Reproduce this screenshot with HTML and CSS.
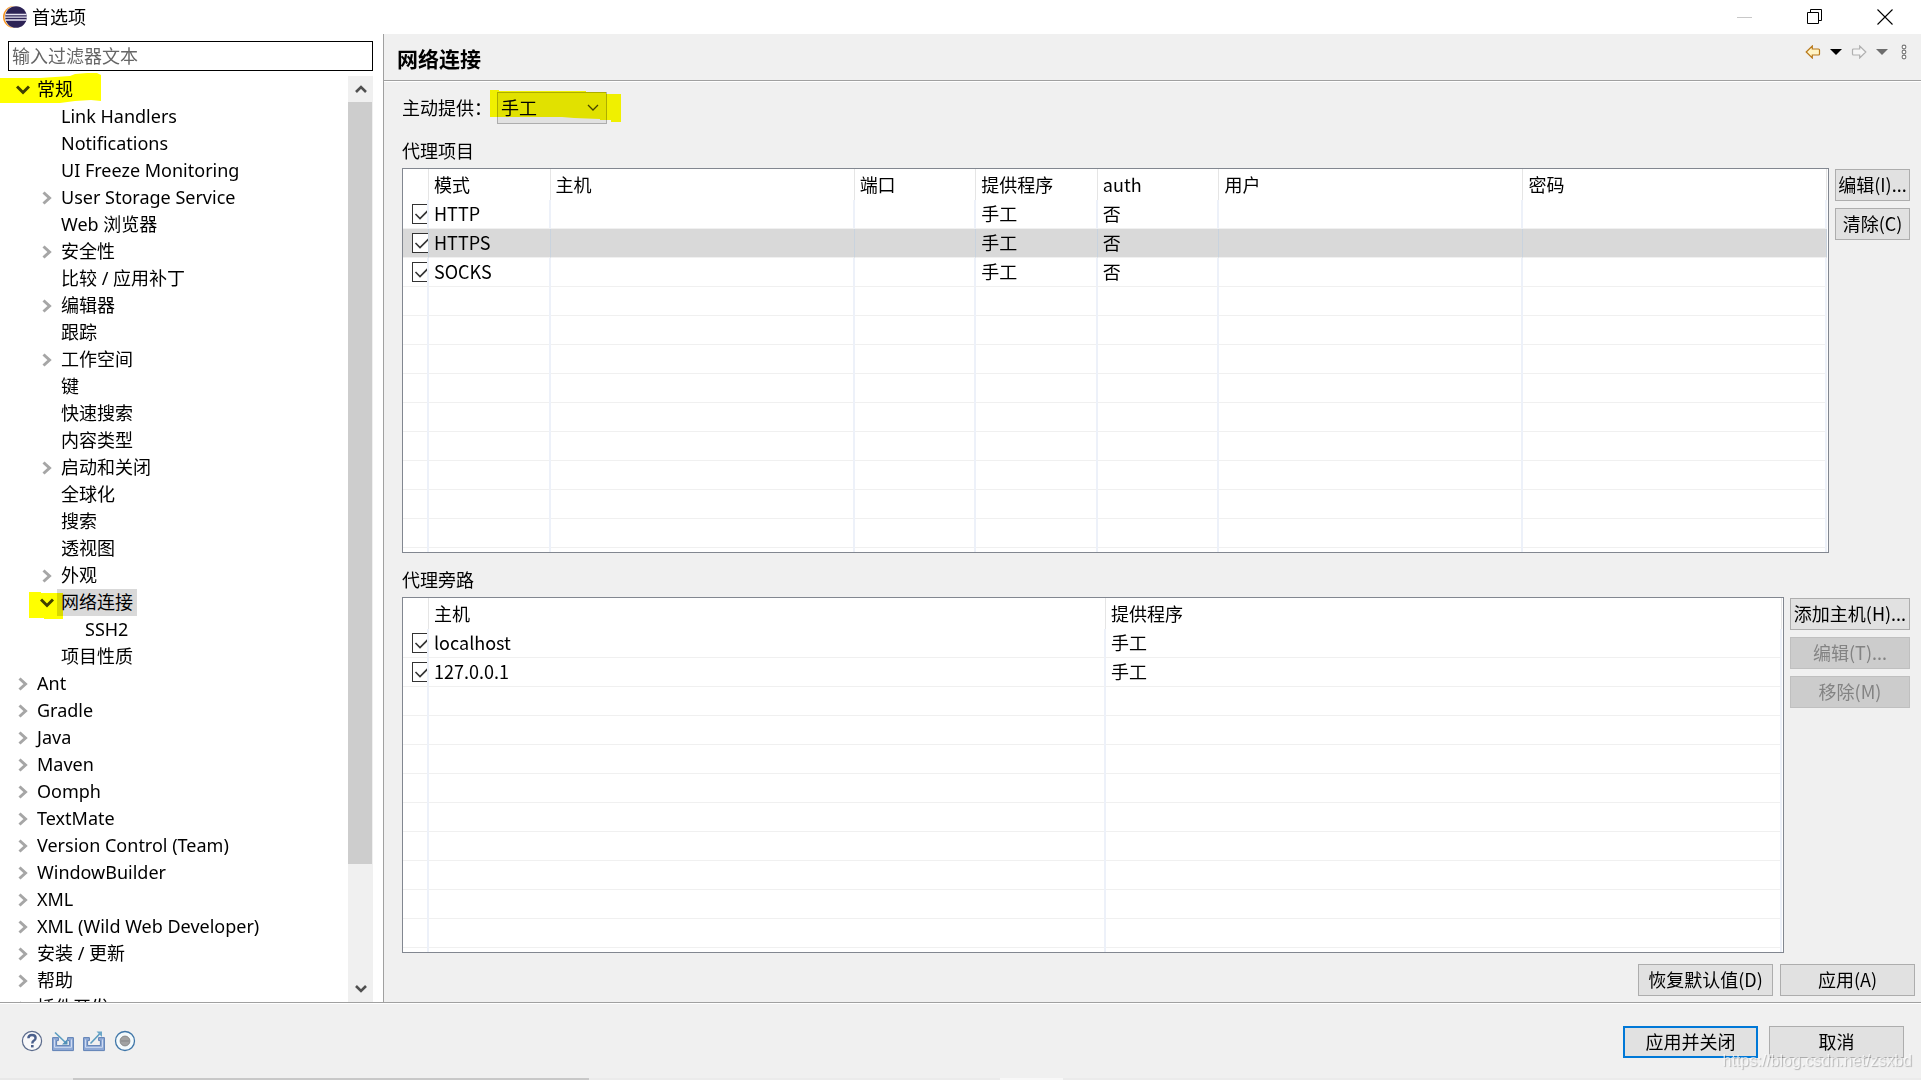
FILE: index.html
```html
<!DOCTYPE html>
<html lang="zh-CN">
<head>
    <meta charset="UTF-8">
    <meta name="viewport" content="width=device-width, initial-scale=1.0">
    <title>首选项</title>
    <link rel="stylesheet" href="styles.css">
</head>
<body>
    <!-- Shared icons -->
    <svg class="sprite" aria-hidden="true">
        <symbol id="chevron-right" viewBox="0 0 10 14">
            <path d="M1.5 1.5 L7.5 7 L1.5 12.5" fill="none" stroke="#a6a6a6" stroke-width="3"/>
        </symbol>
        <symbol id="chevron-down" viewBox="0 0 14 10">
            <path d="M1 1.5 L7 7.5 L13 1.5" fill="none" stroke="#404040" stroke-width="3"/>
        </symbol>
    </svg>

    <div class="window">
        <header class="titlebar">
            <svg class="logo" viewBox="0 0 24 22">
                <circle cx="11" cy="11" r="11" fill="#f7941e"/>
                <circle cx="12.6" cy="11" r="11" fill="#fff"/>
                <circle cx="13" cy="11" r="10.8" fill="#2c2255"/>
                <path d="M2.4 8.5h21.2M2 11.2h22M2.4 14h21.2" stroke="#e6e3f2" stroke-width="1.3"/>
            </svg>
            <h1>首选项</h1>
            <div class="window-buttons">
                <button type="button" class="win-btn" aria-label="最小化">
                    <svg width="16" height="16"><path d="M0 8.5h15" stroke="#c8c8c8"/></svg>
                </button>
                <button type="button" class="win-btn" aria-label="还原">
                    <svg width="16" height="16"><path d="M.5 3.5h11v11H.5zM3.5 3.5v-3h11v11h-3" fill="none" stroke="#000"/></svg>
                </button>
                <button type="button" class="win-btn" aria-label="关闭">
                    <svg width="16" height="16"><path d="M.5 .5l15 15M15.5 .5l-15 15" stroke="#000" stroke-width="1.1"/></svg>
                </button>
            </div>
        </header>

        <div class="content">
            <aside class="sidebar">
                <input type="text" class="filter" placeholder="输入过滤器文本" aria-label="输入过滤器文本">
                <div class="tree-wrap">
                    <ul class="tree">
                        <li>
                            <div class="node marked">
                                <button type="button" class="twisty" aria-label="折叠"><svg class="down"><use href="#chevron-down"/></svg></button><span>常规</span>
                                <svg class="marker marker-general" viewBox="0 0 101 31"><path d="M0 6h40l30-2 5-2 12-1h10l4 2v26l-10-1-16 1-15 2H0z"/></svg>
                            </div>
                            <ul>
                                <li><div class="node"><span>Link Handlers</span></div></li>
                                <li><div class="node"><span>Notifications</span></div></li>
                                <li><div class="node"><span>UI Freeze Monitoring</span></div></li>
                                <li><div class="node"><button type="button" class="twisty" aria-label="展开"><svg><use href="#chevron-right"/></svg></button><span>User Storage Service</span></div></li>
                                <li><div class="node"><span>Web 浏览器</span></div></li>
                                <li><div class="node"><button type="button" class="twisty" aria-label="展开"><svg><use href="#chevron-right"/></svg></button><span>安全性</span></div></li>
                                <li><div class="node"><span>比较 / 应用补丁</span></div></li>
                                <li><div class="node"><button type="button" class="twisty" aria-label="展开"><svg><use href="#chevron-right"/></svg></button><span>编辑器</span></div></li>
                                <li><div class="node"><span>跟踪</span></div></li>
                                <li><div class="node"><button type="button" class="twisty" aria-label="展开"><svg><use href="#chevron-right"/></svg></button><span>工作空间</span></div></li>
                                <li><div class="node"><span>键</span></div></li>
                                <li><div class="node"><span>快速搜索</span></div></li>
                                <li><div class="node"><span>内容类型</span></div></li>
                                <li><div class="node"><button type="button" class="twisty" aria-label="展开"><svg><use href="#chevron-right"/></svg></button><span>启动和关闭</span></div></li>
                                <li><div class="node"><span>全球化</span></div></li>
                                <li><div class="node"><span>搜索</span></div></li>
                                <li><div class="node"><span>透视图</span></div></li>
                                <li><div class="node"><button type="button" class="twisty" aria-label="展开"><svg><use href="#chevron-right"/></svg></button><span>外观</span></div></li>
                                <li>
                                    <div class="node selected marked">
                                        <button type="button" class="twisty" aria-label="折叠"><svg class="down"><use href="#chevron-down"/></svg></button><span>网络连接</span>
                                        <svg class="marker marker-network" viewBox="0 0 34 27"><path d="M0 0h12v1h22v26H15v-1H0z"/></svg>
                                    </div>
                                    <ul>
                                        <li><div class="node"><span>SSH2</span></div></li>
                                    </ul>
                                </li>
                                <li><div class="node"><span>项目性质</span></div></li>
                            </ul>
                        </li>
                        <li><div class="node"><button type="button" class="twisty" aria-label="展开"><svg><use href="#chevron-right"/></svg></button><span>Ant</span></div></li>
                        <li><div class="node"><button type="button" class="twisty" aria-label="展开"><svg><use href="#chevron-right"/></svg></button><span>Gradle</span></div></li>
                        <li><div class="node"><button type="button" class="twisty" aria-label="展开"><svg><use href="#chevron-right"/></svg></button><span>Java</span></div></li>
                        <li><div class="node"><button type="button" class="twisty" aria-label="展开"><svg><use href="#chevron-right"/></svg></button><span>Maven</span></div></li>
                        <li><div class="node"><button type="button" class="twisty" aria-label="展开"><svg><use href="#chevron-right"/></svg></button><span>Oomph</span></div></li>
                        <li><div class="node"><button type="button" class="twisty" aria-label="展开"><svg><use href="#chevron-right"/></svg></button><span>TextMate</span></div></li>
                        <li><div class="node"><button type="button" class="twisty" aria-label="展开"><svg><use href="#chevron-right"/></svg></button><span>Version Control (Team)</span></div></li>
                        <li><div class="node"><button type="button" class="twisty" aria-label="展开"><svg><use href="#chevron-right"/></svg></button><span>WindowBuilder</span></div></li>
                        <li><div class="node"><button type="button" class="twisty" aria-label="展开"><svg><use href="#chevron-right"/></svg></button><span>XML</span></div></li>
                        <li><div class="node"><button type="button" class="twisty" aria-label="展开"><svg><use href="#chevron-right"/></svg></button><span>XML (Wild Web Developer)</span></div></li>
                        <li><div class="node"><button type="button" class="twisty" aria-label="展开"><svg><use href="#chevron-right"/></svg></button><span>安装 / 更新</span></div></li>
                        <li><div class="node"><button type="button" class="twisty" aria-label="展开"><svg><use href="#chevron-right"/></svg></button><span>帮助</span></div></li>
                        <li><div class="node"><button type="button" class="twisty" aria-label="展开"><svg><use href="#chevron-right"/></svg></button><span>插件开发</span></div></li>
                    </ul>
                    <div class="scrollbar">
                        <button type="button" class="scroll-btn" aria-label="向上滚动">
                            <svg width="12" height="10"><path d="M1 8 L6 3 L11 8" fill="none" stroke="#505050" stroke-width="2.6"/></svg>
                        </button>
                        <div class="scroll-track"><div class="scroll-thumb"></div></div>
                        <button type="button" class="scroll-btn" aria-label="向下滚动">
                            <svg width="12" height="10"><path d="M1 2 L6 7 L11 2" fill="none" stroke="#505050" stroke-width="2.6"/></svg>
                        </button>
                    </div>
                </div>
            </aside>

            <main class="page">
                <div class="page-header">
                    <h2>网络连接</h2>
                    <div class="history">
                        <button type="button" class="icon-btn" aria-label="后退">
                            <svg width="16" height="14"><path d="M1.2 7 L7.3 1 V4 H13.5 Q14.5 4 14.5 5 V9 Q14.5 10 13.5 10 H7.3 V13 Z" fill="#fff3c4" stroke="#b8781a" stroke-width="1.2"/></svg>
                        </button>
                        <button type="button" class="icon-btn" aria-label="后退历史">
                            <svg width="12" height="14"><path d="M0 4h12l-6 6z" fill="#000"/></svg>
                        </button>
                        <button type="button" class="icon-btn" aria-label="前进">
                            <svg width="16" height="14"><path d="M14.8 7 L8.7 1 V4 H2.5 Q1.5 4 1.5 5 V9 Q1.5 10 2.5 10 H8.7 V13 Z" fill="#f6f6f6" stroke="#b0b0b0" stroke-width="1.2"/></svg>
                        </button>
                        <button type="button" class="icon-btn" aria-label="前进历史">
                            <svg width="12" height="14"><path d="M0 4h12l-6 6z" fill="#6d6d6d"/></svg>
                        </button>
                        <button type="button" class="icon-btn menu-btn" aria-label="菜单">
                            <svg width="6" height="16"><g fill="#fff" stroke="#777" stroke-width="1.1"><circle cx="3" cy="3" r="1.9"/><circle cx="3" cy="8" r="1.9"/><circle cx="3" cy="13" r="1.9"/></g></svg>
                        </button>
                    </div>
                </div>

                <div class="page-body">
                    <div class="provider">
                        <label for="provider">主动提供：</label>
                        <div class="select-wrap">
                            <select id="provider">
                                <option>手工</option>
                            </select>
                            <svg class="marker marker-provider" viewBox="0 0 132 32"><path d="M0 0h9v1h87v1h20v2h15v28h-10v-2h-11v-1l-26-1-12-1H0z"/></svg>
                        </div>
                    </div>

                    <h3>代理项目</h3>
                    <div class="section section-entries">
                        <div class="table-box">
                            <table>
                                <colgroup>
                                    <col class="col-check"><col class="col-narrow"><col class="col-wide"><col class="col-narrow"><col class="col-narrow"><col class="col-narrow"><col class="col-wide"><col>
                                </colgroup>
                                <thead>
                                    <tr><th></th><th>模式</th><th>主机</th><th>端口</th><th>提供程序</th><th>auth</th><th>用户</th><th>密码</th></tr>
                                </thead>
                                <tbody>
                                    <tr><td><input type="checkbox" aria-label="HTTP" checked></td><td>HTTP</td><td></td><td></td><td>手工</td><td>否</td><td></td><td></td></tr>
                                    <tr class="selected"><td><input type="checkbox" aria-label="HTTPS" checked></td><td>HTTPS</td><td></td><td></td><td>手工</td><td>否</td><td></td><td></td></tr>
                                    <tr><td><input type="checkbox" aria-label="SOCKS" checked></td><td>SOCKS</td><td></td><td></td><td>手工</td><td>否</td><td></td><td></td></tr>
                                    <tr class="rest"><td></td><td></td><td></td><td></td><td></td><td></td><td></td><td></td></tr>
                                </tbody>
                            </table>
                        </div>
                        <div class="actions actions-small">
                            <button type="button" class="btn">编辑(I)...</button>
                            <button type="button" class="btn">清除(C)</button>
                        </div>
                    </div>

                    <h3>代理旁路</h3>
                    <div class="section section-bypass">
                        <div class="table-box">
                            <table>
                                <colgroup>
                                    <col class="col-check"><col class="col-half"><col>
                                </colgroup>
                                <thead>
                                    <tr><th></th><th>主机</th><th>提供程序</th></tr>
                                </thead>
                                <tbody>
                                    <tr><td><input type="checkbox" aria-label="localhost" checked></td><td>localhost</td><td>手工</td></tr>
                                    <tr><td><input type="checkbox" aria-label="127.0.0.1" checked></td><td>127.0.0.1</td><td>手工</td></tr>
                                    <tr class="rest"><td></td><td></td><td></td></tr>
                                </tbody>
                            </table>
                        </div>
                        <div class="actions">
                            <button type="button" class="btn">添加主机(H)...</button>
                            <button type="button" class="btn" disabled>编辑(T)...</button>
                            <button type="button" class="btn" disabled>移除(M)</button>
                        </div>
                    </div>
                </div>

                <div class="page-buttons">
                    <button type="button" class="btn btn-large">恢复默认值(D)</button>
                    <button type="button" class="btn btn-large">应用(A)</button>
                </div>
            </main>
        </div>

        <footer class="footer">
            <div class="tools">
                <button type="button" class="icon-btn" aria-label="帮助">
                    <svg width="22" height="22"><circle cx="11" cy="11" r="9.6" fill="#f8f8fa" stroke="#5b6b8c" stroke-width="1.2"/><path d="M7.4 8.3 Q7.4 5 11 5 Q14.6 5 14.6 7.9 Q14.6 9.6 12.7 10.8 Q11.3 11.7 11.3 13.4" fill="none" stroke="#4a5f8c" stroke-width="2.4"/><rect x="10" y="15" width="2.6" height="2.4" fill="#4a5f8c"/></svg>
                </button>
                <button type="button" class="icon-btn" aria-label="导入">
                    <svg width="22" height="22"><path d="M.6 7.6H6.4v3H4.6v5h12.8v-5h-1.800v-3h5.800v13H.6z" fill="#8fa9d6" stroke="#5f80b5" stroke-width="1"/><path d="M2.5 9.500v7.800h17V9.500" fill="none" stroke="#dfe9f7" stroke-width=".8"/><path d="M3 2.5l10.5 10" stroke="#5a9cc0" stroke-width="1.6"/><path d="M15.5 9v5.500H10z" fill="#4f8fb8"/></svg>
                </button>
                <button type="button" class="icon-btn" aria-label="导出">
                    <svg width="22" height="22"><path d="M.6 7.6H6.4v3H4.6v5h12.8v-5h-1.800v-3h5.800v13H.6z" fill="#8fa9d6" stroke="#5f80b5" stroke-width="1"/><path d="M2.5 9.500v7.800h17V9.500" fill="none" stroke="#dfe9f7" stroke-width=".8"/><path d="M7.5 13.5l9.500-10" stroke="#5a9cc0" stroke-width="1.6"/><path d="M13.5 1.5H19V7z" fill="#6ba6c8"/></svg>
                </button>
                <button type="button" class="icon-btn" aria-label="录制">
                    <svg width="22" height="22"><circle cx="11" cy="11" r="9.5" fill="#f4fafc" stroke="#3f76a8" stroke-width="1.3"/><circle cx="11" cy="11" r="4.9" fill="#a2a2a2" stroke="#8a8a8a"/><path d="M7 11h8" stroke="#858585"/></svg>
                </button>
            </div>
            <div class="dialog-buttons">
                <button type="button" class="btn btn-large btn-default">应用并关闭</button>
                <button type="button" class="btn btn-large">取消</button>
            </div>
            <span class="watermark">https://blog.csdn.net/zsxbd</span>
        </footer>
        <div class="edge"></div>
    </div>
</body>
</html>
```
FILE: styles.css
```css
* {
    margin: 0;
    padding: 0;
    box-sizing: border-box;
}

body {
    font-family: "Noto Sans CJK SC", sans-serif;
    font-size: 18px;
    line-height: 24px;
    color: #000;
    background: #fff;
}

button,
input,
select {
    font: inherit;
    color: inherit;
}

svg {
    display: block;
}

.sprite {
    position: absolute;
    width: 0;
    height: 0;
}

.window {
    display: flex;
    flex-direction: column;
    height: 100vh;
    overflow: hidden;
}

/* Title bar */
.titlebar {
    display: flex;
    align-items: center;
    height: 34px;
    padding: 0 1px 0 3px;
}

.logo {
    width: 24px;
    height: 22px;
}

.titlebar h1 {
    margin-left: 5px;
    padding-bottom: 2px;
    font-size: 18px;
    font-weight: 400;
}

.window-buttons {
    display: flex;
    margin-left: auto;
}

.win-btn {
    display: flex;
    align-items: center;
    justify-content: center;
    width: 70px;
    height: 34px;
    border: none;
    background: none;
}

.content {
    display: flex;
    flex: 1;
    min-height: 0;
}

/* Tree */
.sidebar {
    display: flex;
    flex-direction: column;
    width: 383px;
    flex-shrink: 0;
    padding-top: 7px;
}

.filter {
    height: 30px;
    margin: 0 10px 0 8px;
    padding: 0 3px 2px;
    border: 1px solid #000;
    background: #fff;
}

.filter::placeholder {
    color: #666;
}

.tree-wrap {
    display: flex;
    flex: 1;
    min-height: 0;
    padding-right: 10px;
}

.tree {
    flex: 1;
    padding-top: 5px;
    overflow: hidden;
    font-family: "Noto Sans", "Noto Sans CJK SC", sans-serif;
    list-style: none;
}

.tree ul {
    padding-left: 24px;
    list-style: none;
}

.node {
    display: flex;
    align-items: center;
    height: 27px;
    padding-left: 33px;
    line-height: 27px;
    white-space: nowrap;
}

.node span {
    padding: 0 4px;
}

.node.selected span {
    background: #d9d9d9;
}

.marked {
    position: relative;
}

.twisty {
    display: flex;
    align-items: center;
    justify-content: center;
    width: 22px;
    height: 27px;
    margin-left: -22px;
    padding-left: 1px;
    border: none;
    background: none;
}

.twisty svg {
    width: 10px;
    height: 14px;
}

.twisty svg.down {
    width: 14px;
    height: 10px;
}

/* Highlighter strokes */
.marker {
    position: absolute;
    fill: #ff0;
    mix-blend-mode: multiply;
    pointer-events: none;
}

.marker-general {
    left: 0;
    top: -4px;
    width: 101px;
    height: 31px;
}

.marker-network {
    left: 5px;
    top: 3px;
    width: 34px;
    height: 27px;
}

.marker-provider {
    left: -7px;
    top: -2px;
    width: 132px;
    height: 32px;
}

.scrollbar {
    display: flex;
    flex-direction: column;
    width: 25px;
    margin-top: 5px;
    background: #f0f0f0;
}

.scroll-btn {
    display: flex;
    align-items: center;
    justify-content: center;
    height: 26px;
    border: none;
    background: none;
}

.scroll-track {
    flex: 1;
}

.scroll-thumb {
    width: 24px;
    height: 87.2%;
    background: #cdcdcd;
}

/* Page */
.page {
    display: flex;
    flex-direction: column;
    flex: 1;
    min-width: 0;
    border-left: 1px solid #a0a0a0;
    background: #f0f0f0;
}

.page-header {
    display: flex;
    justify-content: space-between;
    height: 48px;
    padding: 0 14px 0 13px;
    border-bottom: 1px solid #fff;
    box-shadow: inset 0 -1px #a0a0a0;
}

.page-header h2 {
    font-size: 21px;
    font-weight: 700;
    line-height: 48px;
}

.history {
    display: flex;
    align-items: center;
    gap: 9px;
    height: 36px;
}

.icon-btn {
    border: none;
    background: none;
}

.menu-btn {
    margin-left: 4px;
}

.page-body {
    display: flex;
    flex-direction: column;
    flex: 1;
    min-height: 0;
    padding: 10px 11px 0 18px;
}

.provider {
    display: flex;
    align-items: center;
}

.provider label {
    padding-bottom: 2px;
}

.select-wrap {
    position: relative;
    margin-left: 5px;
}

select {
    display: block;
    width: 110px;
    height: 32px;
    padding: 0 3px 2px;
    border: 1px solid #adadad;
    border-radius: 0;
    appearance: none;
    background: #e1e1e1 url("data:image/svg+xml,%3Csvg xmlns='http://www.w3.org/2000/svg' width='12' height='8'%3E%3Cpath d='M1 1l5 5 5-5' fill='none' stroke='%23444' stroke-width='1.3'/%3E%3C/svg%3E") no-repeat right 7px center;
}

.page-body h3 {
    margin-top: 12px;
    padding-bottom: 4px;
    font-size: 18px;
    font-weight: 400;
    line-height: 28px;
}

.section {
    display: flex;
    gap: 6px;
    min-height: 0;
}

.section-entries {
    flex: 1 1 385px;
}

.section-bypass {
    flex: 1 1 356px;
}

.table-box {
    flex: 1;
    min-width: 0;
    padding-right: 1px;
    border: 1px solid #828790;
    background: #fff;
    overflow: hidden;
}

table {
    width: 100%;
    height: 100%;
    table-layout: fixed;
    border-collapse: separate;
    border-spacing: 0;
}

.col-check {
    width: 26px;
}

.col-narrow {
    width: 8.54%;
}

.col-wide {
    width: 21.35%;
}

.col-half {
    width: 49.1%;
}

th {
    height: 31px;
    padding: 0 0 2px 5px;
    border-right: 1px solid #e5e5e5;
    font-weight: 400;
    text-align: left;
}

td {
    height: 29px;
    padding: 0 0 2px 5px;
    border-right: 2px solid #edf1f9;
    border-bottom: 1px solid #f0f0f0;
    overflow: hidden;
    white-space: nowrap;
}

td:first-child {
    padding: 0 0 0 9px;
}

tr.selected td {
    border-right: 1px solid #c9d3de;
    background: #d9d9d9;
}

tr.rest td {
    height: auto;
    border-bottom: none;
    background: repeating-linear-gradient(#fff 0 28px, #f0f0f0 28px 29px);
}

input[type="checkbox"] {
    display: block;
    width: 20px;
    height: 20px;
    border: 1px solid #333;
    appearance: none;
    background: #fff;
}

input[type="checkbox"]:checked {
    background: #fff url("data:image/svg+xml,%3Csvg xmlns='http://www.w3.org/2000/svg' width='18' height='18'%3E%3Cpath d='M2.5 9l4.5 4.5L15.5 5' fill='none' stroke='%23333' stroke-width='1.6'/%3E%3C/svg%3E") no-repeat;
}

/* Buttons */
.actions {
    display: flex;
    flex-direction: column;
    gap: 7px;
    width: 120px;
    padding-top: 1px;
}

.actions-small {
    width: 75px;
}

.btn {
    height: 32px;
    padding-bottom: 2px;
    border: 1px solid #adadad;
    background: #e1e1e1;
    white-space: nowrap;
}

.btn:disabled {
    border-color: #bfbfbf;
    background: #ccc;
    color: #838383;
}

.btn-large {
    width: 135px;
}

.btn-default {
    border: 2px solid #0078d7;
}

.page-buttons {
    display: flex;
    justify-content: flex-end;
    gap: 7px;
    padding: 11px 6px 6px;
}

/* Footer */
.footer {
    position: relative;
    display: flex;
    align-items: center;
    justify-content: space-between;
    height: 76px;
    padding: 2px 17px 0 21px;
    border-top: 1px solid #a0a0a0;
    background: #f0f0f0;
    box-shadow: inset 0 1px #fff;
}

.tools {
    display: flex;
    gap: 9px;
    padding-bottom: 2px;
}

.dialog-buttons {
    display: flex;
    gap: 11px;
}

.watermark {
    position: absolute;
    right: 9px;
    bottom: 5px;
    font: 16px/24px "Liberation Sans", sans-serif;
    color: rgba(255, 255, 255, 0.7);
    text-shadow: 1px 1px 1px rgba(0, 0, 0, 0.25);
}

.edge {
    height: 2px;
    background: linear-gradient(90deg, #e8e8e8 73px, #c8c8c8 73px 589px, #ebebeb 589px 1000px, #f8f8f8 1000px 1063px, #ebebeb 1063px);
}
```
